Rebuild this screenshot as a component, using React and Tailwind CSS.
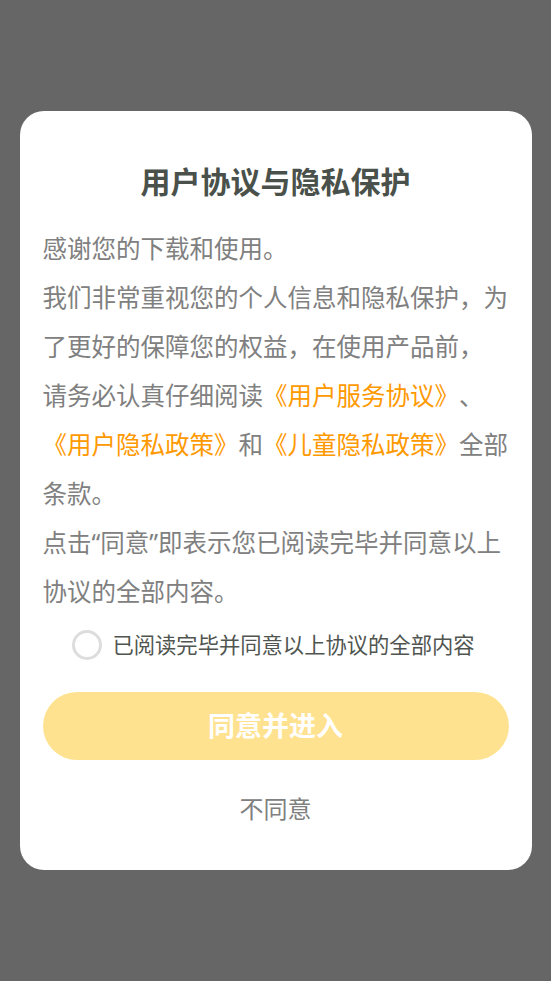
import React, { useState } from 'react';

const font = { fontFamily: '"Noto Sans", "Noto Sans CJK SC", sans-serif' };

function Link({ children }) {
  return <span className="text-[#ff9900]">{children}</span>;
}

export default function App() {
  const [checked, setChecked] = useState(false);

  return (
    <div
      className="min-h-[981px] w-full bg-[#666666] flex items-start justify-center pt-[111px] [text-spacing-trim:space-all]"
      style={font}
    >
      <div className="w-[512px] bg-white rounded-[24px] px-[23px] pt-[51px] pb-[44px] flex flex-col">
        <h1 className="text-center text-[30px] leading-[40px] font-bold text-[#4a514a]">
          用户协议与隐私保护
        </h1>

        <div className="mt-[22px] -mr-[3px] text-[24.5px] leading-[49px] text-[#808080]">
          <p>感谢您的下载和使用。</p>
          <p>
            我们非常重视您的个人信息和隐私保护，为了更好的保障您的权益，在使用产品前，
            <br />
            请务必认真仔细阅读<Link>《用户服务协议》</Link>、<Link>《用户隐私政策》</Link>和
            <Link>《儿童隐私政策》</Link>全部条款。
          </p>
          <p>点击“同意”即表示您已阅读完毕并同意以上协议的全部内容。</p>
        </div>

        <button
          onClick={() => setChecked(!checked)}
          className="mt-[14px] flex items-center justify-center gap-[10px] h-[30px] -ml-[4px]"
        >
          <span
            className={
              checked
                ? 'w-[30px] h-[30px] rounded-full border-[3px] border-[#ffc107] bg-[#ffc107]'
                : 'w-[30px] h-[30px] rounded-full border-[3px] border-[#dddddd]'
            }
          />
          <span className="text-[21.3px] leading-[30px] text-[#505550]">
            已阅读完毕并同意以上协议的全部内容
          </span>
        </button>

        <button
          className={
            checked
              ? 'mt-[32px] h-[68px] w-full rounded-full bg-[#ffc72c] text-white text-[27px] font-bold'
              : 'mt-[32px] h-[68px] w-full rounded-full bg-[#ffe290] text-white text-[27px] font-bold'
          }
        >
          同意并进入
        </button>

        <button className="mt-[32px] h-[34px] text-[24px] leading-[34px] text-[#808080]">
          不同意
        </button>
      </div>
    </div>
  );
}
